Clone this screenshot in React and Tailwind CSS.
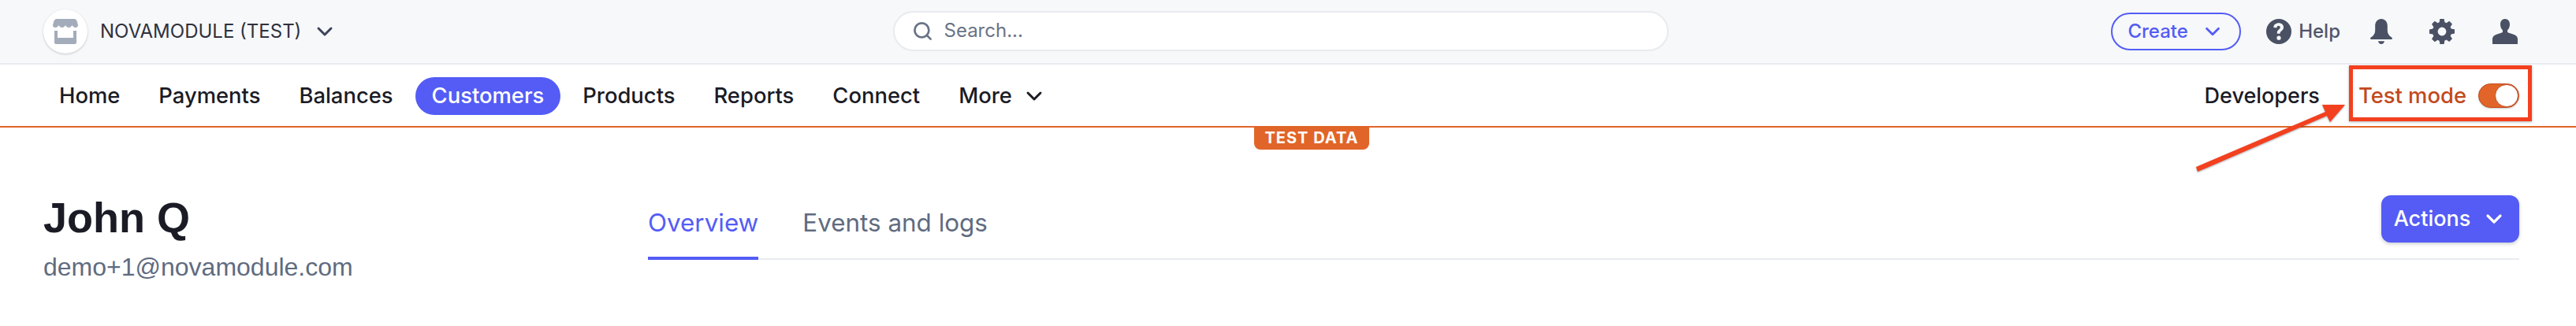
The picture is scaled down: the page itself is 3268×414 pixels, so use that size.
import React from 'react';
import { ChevronDown, Search } from 'lucide-react';

const navItems = ['Home', 'Payments', 'Balances', 'Customers', 'Products', 'Reports', 'Connect'];

function HelpIcon() {
  return (
    <svg width="32" height="32" viewBox="0 0 16 16" fill="#4a5164">
      <path fillRule="evenodd" d="M8 0a8 8 0 1 1 0 16A8 8 0 0 1 8 0zm-.1 2.600C6 2.600 4.800 3.700 4.600 5.400l2 .3c.1-.8.500-1.300 1.200-1.300.6 0 1.100.4 1.100 1 0 .5-.3.8-.9 1.300-.8.6-1.100 1.200-1.100 2.100v.6h1.900v-.4c0-.5.2-.7.8-1.200.8-.6 1.400-1.300 1.400-2.500 0-1.600-1.300-2.700-3.100-2.700zM8 10.800a1.300 1.300 0 1 0 0 2.600 1.300 1.300 0 0 0 0-2.600z" />
    </svg>
  );
}

function BellIcon() {
  return (
    <svg width="32" height="32" viewBox="0 0 16 16" fill="#4a5164">
      <path d="M8 0c2.300 0 3.900 1.800 3.900 4.300v2.900c0 2 .8 3.300 2.700 4.500.6.400.5 1.300-.3 1.300H1.700c-.8 0-.9-.9-.3-1.300 1.900-1.200 2.700-2.500 2.700-4.500V4.300C4.100 1.800 5.700 0 8 0z" />
      <path d="M6 14.100h4C9.800 15.300 9 16 8 16s-1.800-.7-2-1.900z" />
    </svg>
  );
}

function GearIcon() {
  return (
    <svg width="32" height="32" viewBox="0 0 16 16" fill="#4a5164">
      <path fillRule="evenodd" d="M6.700 0h2.600l.4 2.100c.4.100.8.300 1.100.5l1.800-1.200 1.900 1.900-1.200 1.800c.2.300.4.700.5 1.100l2.200.4v2.700l-2.200.4c-.1.400-.3.800-.5 1.100l1.200 1.800-1.900 1.900-1.800-1.200c-.3.200-.7.400-1.100.5L9.300 16H6.700l-.4-2.100c-.4-.1-.8-.3-1.100-.5l-1.800 1.200-1.900-1.900 1.200-1.800c-.2-.3-.4-.7-.5-1.100L0 9.400V6.700l2.200-.4c.1-.4.300-.8.500-1.100L1.500 3.300l1.900-1.900 1.800 1.200c.3-.2.700-.4 1.100-.5L6.700 0zM8 5.300a2.700 2.700 0 1 0 0 5.400 2.700 2.700 0 0 0 0-5.400z" />
    </svg>
  );
}

function UserIcon() {
  return (
    <svg width="32" height="32" viewBox="0 0 16 16" fill="#4a5164">
      <path d="M8 0c1.900 0 3 1.500 3 3.500 0 1.500-.6 2.900-1.500 3.700v.7c0 .5.300.8.900 1l2.700.9c1.800.6 2.900 1.500 2.900 2.900v2.800c0 .6-.4 1-1 1H1c-.6 0-1-.4-1-1v-2.800c0-1.400 1.100-2.300 2.900-2.900l2.700-.9c.6-.2.900-.5.900-1v-.7C5.600 6.400 5 5 5 3.500 5 1.500 6.100 0 8 0z" />
    </svg>
  );
}

function StoreIcon() {
  return (
    <svg width="32" height="32" viewBox="0 0 32 32" fill="#a3acba">
      <path d="M5 0h22c2 0 3 1 4 4l1 4c0 2-1.500 3-3 3-2 0-3.500-1-4.500-3-1 2-2.500 3-4.200 3S17 10 16 8c-1 2-2.600 3-4.300 3S8.500 10 7.500 8C6.500 10 5 11 3 11 1.500 11 0 10 0 8l1-4C2 1 3 0 5 0z" />
      <path d="M2 15h4v9h20v-9h4v15c0 1.200-.8 2-2 2H4c-1.200 0-2-.8-2-2V15z" />
    </svg>
  );
}

export default function App() {
  return (
    <div className="relative w-[3268px] h-[414px] bg-white overflow-hidden font-['Inter',sans-serif]">
      {/* Top bar */}
      <header className="relative h-[82px] bg-[#f6f8fa] border-b-2 border-[#e8ebef] flex items-center pl-[55px] pr-[74px]">
        <div className="flex-1 flex items-center">
          <div className="w-[56px] h-[56px] rounded-full bg-white shadow-[0_1px_3px_rgba(0,0,0,0.2)] flex items-center justify-center">
            <StoreIcon />
          </div>
          <span className="ml-[16px] text-[24px] text-[#30313d]">NOVAMODULE (TEST)</span>
          <ChevronDown size={32} strokeWidth={2.2} className="ml-[14px] text-[#3c4257]" />
        </div>
        <div className="w-[984px] h-[51px] mb-[2px] rounded-full bg-white border-2 border-[#e8ebef] flex items-center pl-[22px] gap-[14px]">
          <Search size={27} strokeWidth={2.4} className="text-[#697386]" />
          <span className="text-[24px] text-[#697386]">Search...</span>
        </div>
        <div className="flex-1 flex items-center justify-end">
          <button className="w-[165px] h-[48px] rounded-full border-2 border-[#545cf5] flex items-center justify-center gap-[16px] text-[24px] font-medium text-[#545cf5]">
            Create
            <ChevronDown size={30} strokeWidth={2.2} />
          </button>
          <div className="ml-[32px] flex items-center gap-[9px]">
            <HelpIcon />
            <span className="text-[24px] font-medium text-[#4f566b]">Help</span>
          </div>
          <div className="ml-[36px]"><BellIcon /></div>
          <div className="ml-[45px]"><GearIcon /></div>
          <div className="ml-[48px]"><UserIcon /></div>
        </div>
      </header>

      {/* Main nav */}
      <nav className="relative h-[80px] pt-[2px] border-b-2 border-[#e16528] flex items-center pl-[54px] pr-[72px]">
        <div className="flex items-center gap-[7px]">
          {navItems.map((item) => (
            <a
              key={item}
              className={`h-[48px] px-[21px] rounded-full flex items-center text-[27.4px] font-medium ${
                item === 'Customers' ? 'bg-[#545cf5] text-white' : 'text-[#1a1b25]'
              }`}
            >
              {item}
            </a>
          ))}
          <a className="h-[48px] pl-[21px] flex items-center gap-[12px] text-[27.4px] font-medium text-[#1a1b25]">
            More
            <ChevronDown size={32} strokeWidth={2.2} />
          </a>
        </div>
        <div className="ml-auto flex items-center">
          <span className="text-[27px] font-medium text-[#1a1b25]">Developers</span>
          <span className="ml-[49px] text-[27.4px] font-medium text-[#c2491d]">Test mode</span>
          <div className="ml-[15px] w-[52px] h-[31px] rounded-full bg-[#e16528] border border-[#c2491d] flex justify-end shadow-[0_1px_2px_rgba(0,0,0,0.2)]">
            <div className="w-[30px] h-full rounded-full bg-white border border-[#c2491d]" />
          </div>
        </div>
        {/* TEST DATA tab hanging off the orange line */}
        <div className="absolute left-[1591px] top-[78px] w-[146px] h-[30px] rounded-b-[8px] bg-[#e16528] flex items-center justify-center text-[20px] font-bold tracking-[1px] text-white">
          TEST DATA
        </div>
      </nav>

      {/* Customer header */}
      <main className="flex pl-[55px] pr-[72px]">
        <div className="w-[767px] pt-[84px]">
          <h1 className="text-[54px] leading-[60px] font-bold text-[#1a1b25] font-['Liberation_Sans',sans-serif]">John Q</h1>
          <p className="mt-[13px] text-[32px] leading-[40px] text-[#5f6b7f] font-['Liberation_Sans',sans-serif]">demo+1@novamodule.com</p>
        </div>
        <div className="flex-1 h-[168px] border-b-2 border-[#e8ebef] flex items-end justify-between">
          <div className="flex items-end gap-[56px]">
            <span className="h-[70px] border-b-4 border-[#545cf5] -mb-[2px] text-[31.4px] font-normal text-[#545cf5]">Overview</span>
            <span className="h-[68px] text-[31.4px] font-normal text-[#5f6b7f]">Events and logs</span>
          </div>
          <button className="mb-[20px] w-[175px] h-[60px] rounded-[12px] bg-[#545cf5] shadow-[0_2px_4px_rgba(60,66,87,0.25)] flex items-center justify-center gap-[14px] text-[27px] font-medium text-white">
            Actions
            <ChevronDown size={32} strokeWidth={2.4} />
          </button>
        </div>
      </main>

      {/* Red callout drawn over the page */}
      <div className="absolute left-[2980px] top-[83px] w-[232px] h-[71px] border-[5px] border-[#f3401f] shadow-[0_1px_3px_rgba(0,0,0,0.3)] pointer-events-none" />
      <svg className="absolute left-[2770px] top-[120px] pointer-events-none drop-shadow-[0_1px_1px_rgba(0,0,0,0.35)]" width="220" height="110" viewBox="2770 120 220 110">
        <path d="M2786 212 L2950 142 L2946 133 L2975 133 L2956 155 L2952 147 L2788 218 Z" fill="#f3401f" />
      </svg>
    </div>
  );
}
